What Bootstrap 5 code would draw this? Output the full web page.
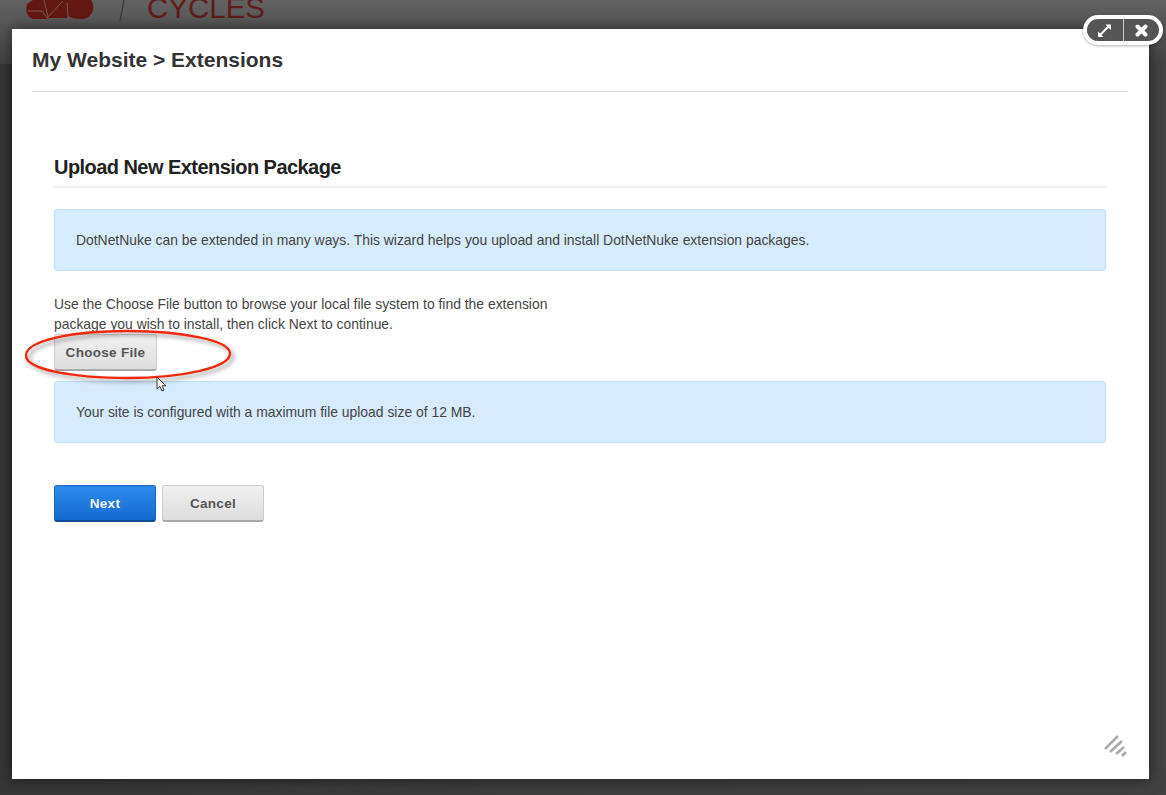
<!DOCTYPE html>
<html lang="en">
<head>
<meta charset="utf-8">
<title>Extensions</title>
<link href="https://cdn.jsdelivr.net/npm/bootstrap@5.3.0/dist/css/bootstrap.min.css" rel="stylesheet">
<style>
html,body{height:100%;margin:0;overflow:hidden}
body{background:#3b3b3b;font-family:"Liberation Sans",Arial,sans-serif;position:relative}
.top-strip{height:64px;background:linear-gradient(#626262,#444);overflow:hidden;display:flex}
.top-strip svg{display:block}
.back-lower{height:731px;background:linear-gradient(90deg,#363636,#3d3d3d 50%,#424242)}
.dlg{position:absolute;left:12px;top:29px;width:1137px;height:750px;background:#fff;box-shadow:0 0 14px rgba(0,0,0,.55)}
.dlg-title{margin:0 21px 0 20px;height:63px;border-bottom:1px solid #ddd;font-size:21px;line-height:23px;font-weight:700;color:#333;padding-top:19px}
.dlg-body{padding:0 43px 0 42px}
.sect-head{margin:63px 0 21px;height:33px;border-bottom:2px solid #eee;font-size:20px;line-height:24px;font-weight:700;letter-spacing:-.55px;color:#222}
.note{height:62px;background:#d7ebfe;border:1px solid #bcdffc;border-radius:3px;color:#444;font-size:13.9px;line-height:15px;padding:23px 21px 0}
.lead-text{width:500px;margin:23px 0 0;color:#444;font-size:13.9px;line-height:20px}
.gbtn{display:block;width:103px;height:37px;padding:2px 0 0;border-radius:3px;font-size:13.5px;font-weight:700;letter-spacing:.3px;font-family:inherit;text-align:center}
.gbtn-grey{color:#555;background:linear-gradient(#f0f0f0,#dedede);border:1px solid #ccc;border-bottom:2px solid #aaa}
.gbtn-blue{color:#eef5ff;background:linear-gradient(#2b8bec,#1669d2);border:1px solid #1a66bd;border-bottom:2px solid #104d96}
.pick-row{margin:0 0 10px}
.act-row{margin-top:42px;gap:6px}
.act-row .gbtn{width:102px}
.dlg-ctrl{position:absolute;left:1083px;top:15px;width:80px;height:30px;background:#fff;border-radius:15px;padding:4px;box-shadow:0 1px 3px rgba(0,0,0,.3)}
.dlg-ctrl-in{height:22px;background:#555;border-radius:11px;display:flex;overflow:hidden}
.dlg-ctrl-in span{flex:1;display:flex;align-items:center;justify-content:center}
.dlg-ctrl-in span+span{border-left:1px solid #ccc}
.ring{position:absolute;left:24px;top:327px;pointer-events:none}
.pointer{position:absolute;left:155px;top:376px}
.grip{position:absolute;left:1103px;top:733px}
</style>
</head>
<body>
<div class="top-strip">
<svg width="300" height="64" viewBox="0 0 300 64" role="img" aria-label="Cycles logo">
<path d="M27 4L33 0h58c3 4 3 10 0 14-2 3-5 5-10 5-6 0-10-1-13-3l-1 2H48l-2 1H33c-6-2-8-8-6-15z" fill="#641812"/>
<path d="M28 11h14l5 7M44 0l4 17M63 1L47 18M67 3l1 14" stroke="#6f5a58" stroke-width="1" fill="none"/>
<path d="M124 0l-4 21" stroke="#383838" stroke-width="1.300"/>
<text x="147" y="18" font-family="Liberation Sans" font-size="29" textLength="118" lengthAdjust="spacingAndGlyphs" fill="#5e1d18">CYCLES</text>
</svg>
</div>
<div class="back-lower"></div>

<div class="dlg">
<div class="dlg-title">My Website &gt; Extensions</div>
<div class="dlg-body">
<div class="sect-head">Upload New Extension Package</div>
<div class="note">DotNetNuke can be extended in many ways. This wizard helps you upload and install DotNetNuke extension packages.</div>
<p class="lead-text">Use the Choose File button to browse your local file system to find the extension package you wish to install, then click Next to continue.</p>
<div class="pick-row"><button type="button" class="gbtn gbtn-grey">Choose File</button></div>
<div class="note">Your site is configured with a maximum file upload size of 12 MB.</div>
<div class="act-row d-flex">
<button type="button" class="gbtn gbtn-blue">Next</button>
<button type="button" class="gbtn gbtn-grey">Cancel</button>
</div>
</div>
</div>

<svg class="grip" width="26" height="26" viewBox="0 0 26 26" aria-hidden="true">
<path d="M2 16L15 3M7 19L19 8M13 21L21 14M19 23L23 19" stroke="#aaa" stroke-width="2.500" fill="none"/>
</svg>

<div class="dlg-ctrl">
<div class="dlg-ctrl-in">
<span><svg width="15" height="15" viewBox="0 0 15 15" aria-hidden="true"><path d="M3.500 11.500l8-8" stroke="#fff" stroke-width="2"/><path d="M8.500 1.500H14v5.500zM1 8.500V14h5.500z" fill="#fff"/></svg></span>
<span><svg width="13" height="13" viewBox="0 0 13 13" aria-hidden="true"><path d="M2.500 2.500l8 8M10.500 2.500l-8 8" stroke="#fff" stroke-width="4" stroke-linecap="round"/></svg></span>
</div>
</div>

<svg class="ring" width="214" height="60" viewBox="0 0 214 60" aria-hidden="true">
<defs><filter id="ringShadow" x="-5%" y="-20%" width="115%" height="150%"><feDropShadow dx="3" dy="3" stdDeviation="2.200" flood-color="#000" flood-opacity=".4"/></filter></defs>
<path d="M2 28C3 13 50 4 104 4c52 0 101 9 102 22 1 15-50 25-102 25C52 51 1 43 2 28z" fill="none" stroke="#ee2a10" stroke-width="2.400" filter="url(#ringShadow)"/>
</svg>
<svg class="pointer" width="14" height="18" viewBox="0 0 14 18" aria-hidden="true"><path d="M2 1v12l3-2.500 2 4.500 2-1-2-4.200h4z" fill="#fff" stroke="#333" stroke-width="1"/></svg>
</body>
</html>
